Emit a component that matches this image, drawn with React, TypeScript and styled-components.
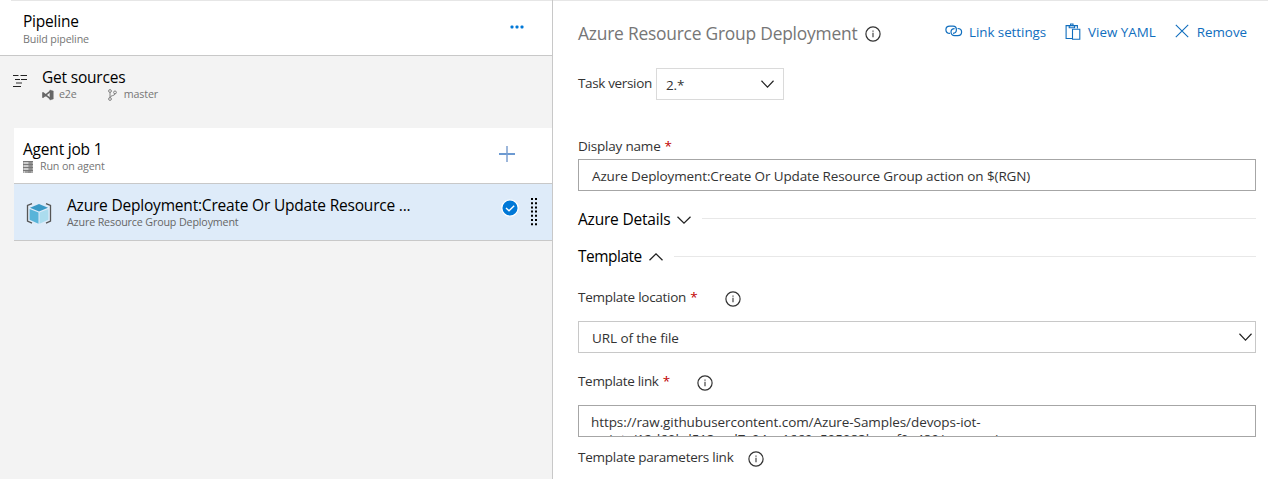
import React from 'react';
import styled, { createGlobalStyle } from 'styled-components';

const Global = createGlobalStyle`
  * { box-sizing: border-box; }
  html, body { margin: 0; background: #fff; }
  body { font-family: "Open Sans", "Noto Sans", sans-serif; overflow: hidden; }
  svg { display: block; flex: none; }
`;

const Page = styled.div`
  display: grid;
  grid-template-columns: 553px 1fr;
  width: 1268px;
  height: 479px;
  overflow: hidden;
`;

const Sidebar = styled.aside`
  background: #f3f3f3;
  border-right: 1px solid #c8c8c8;
  display: flex;
  flex-direction: column;
`;

const TopRule = styled.div<{ $inset?: number }>`
  height: 1px;
  background: #e6e6e6;
  margin-left: ${p => p.$inset ?? 0}px;
`;

const Text = styled.div<{ $size: number; $line: number; $color?: string; $track?: number }>`
  font-size: ${p => p.$size}px;
  line-height: ${p => p.$line}px;
  height: ${p => p.$line}px;
  color: ${p => p.$color ?? '#000'};
  letter-spacing: ${p => p.$track ?? 0}px;
  white-space: nowrap;
`;

const Heading = styled(Text).attrs({ $size: 15.5, $track: -0.2 })``;
const Small = styled(Text).attrs({ $size: 10.7, $line: 15, $track: -0.14 })``;
const Body = styled(Text).attrs({ $size: 13.5, $line: 20 })``;

const PipelineHeader = styled.header`
  height: 56px;
  background: #fff;
  border-bottom: 1px solid #c8c8c8;
  display: flex;
  flex-direction: column;
`;

const HeaderBody = styled.div`
  display: flex;
  justify-content: space-between;
  padding: 10px 28px 0 23px;
`;

const MoreWrap = styled.div`
  padding-top: 14px;
`;

const Sources = styled.section`
  height: 72px;
  display: flex;
  padding: 11px 0 0 13px;
  gap: 14px;
`;

const SourcesIcon = styled.div`
  padding-top: 8px;
`;

const Meta = styled.div`
  display: flex;
  align-items: center;
`;

const MetaIcon = styled.span<{ $gap: number }>`
  margin-right: ${p => p.$gap}px;
`;

const Branch = styled.div`
  display: flex;
  align-items: center;
  margin-left: 31px;
`;

const JobRow = styled.section`
  height: 56px;
  margin-left: 14px;
  background: #fff;
  border-bottom: 1px solid #c8c8c8;
  display: flex;
  justify-content: space-between;
  padding: 11px 37px 0 9px;
`;

const AddWrap = styled.div`
  padding-top: 7px;
`;

const TaskRow = styled.section`
  height: 57px;
  margin-left: 14px;
  background: #deebf9;
  border-bottom: 1px solid #c8c8c8;
  display: flex;
  padding: 0 14px 0 12px;
`;

const TaskIcon = styled.div`
  width: 41px;
  padding-top: 18px;
`;

const TaskText = styled.div`
  flex: 1;
  padding-top: 11px;
`;

const CheckWrap = styled.div`
  padding: 15px 11px 0 0;
`;

const GripWrap = styled.div`
  padding-top: 13px;
`;

const Details = styled.main`
  background: #fff;
  display: flex;
  flex-direction: column;
`;

const DetailsBody = styled.div`
  padding: 0 12px 0 25px;
  display: flex;
  flex-direction: column;
`;

const TitleRow = styled.div`
  display: flex;
  justify-content: space-between;
  height: 67px;
  padding: 19px 9px 0 0;
`;

const Title = styled.div`
  display: flex;
  gap: 8px;
`;

const TitleIcon = styled.div`
  padding-top: 6px;
`;

const Actions = styled.div`
  display: flex;
`;

const Action = styled.div<{ $gap: number; $ml?: number }>`
  display: flex;
  align-items: flex-start;
  gap: ${p => p.$gap}px;
  margin-left: ${p => p.$ml ?? 0}px;
  height: 24px;
`;

const ActionIcon = styled.div<{ $top: number }>`
  padding-top: ${p => p.$top}px;
`;

const VersionRow = styled.div`
  display: flex;
  height: 68px;
`;

const VersionLabel = styled.div`
  width: 78px;
  padding-top: 5px;
`;

const Field = styled.div<{ $color: string; $width?: string; $left?: number; $right?: number }>`
  width: ${p => p.$width ?? '100%'};
  height: 32px;
  border: 1px solid ${p => p.$color};
  background: #fff;
  display: flex;
  justify-content: space-between;
  padding: 6px ${p => p.$right ?? 3}px 0 ${p => p.$left ?? 13}px;
  overflow: hidden;
  flex: none;
`;

const ChevronWrap = styled.div`
  padding-top: 5px;
`;

const LabelRow = styled.div<{ $height: number; $gap?: number; $top?: number }>`
  display: flex;
  height: ${p => p.$height}px;
  padding-top: ${p => p.$top ?? 0}px;
  gap: ${p => p.$gap ?? 0}px;
`;

const Required = styled.span`
  color: #c00000;
  margin-left: 4px;
`;

const InfoWrap = styled.div`
  padding-top: 4px;
`;

const SectionRow = styled.div<{ $height: number; $top: number; $gap: number }>`
  display: flex;
  height: ${p => p.$height}px;
  padding-top: ${p => p.$top}px;
  gap: ${p => p.$gap}px;
`;

const SectionChevron = styled.div`
  padding-top: 8px;
`;

const SectionLine = styled.div<{ $top: number }>`
  flex: 1;
  height: 1px;
  margin: ${p => p.$top}px 0 0 4px;
  background: #e8e8e8;
`;

const UrlText = styled.div`
  font-size: 13.5px;
  line-height: 17px;
  letter-spacing: -0.08px;
  padding-top: 1.5px;
  color: #333;
  white-space: pre;
`;

const Info = () => (
  <svg width="16" height="16" viewBox="0 0 16 16" fill="none" stroke="#333">
    <circle cx="8" cy="8" r="7.1" strokeWidth="1.2" />
    <path d="M8 6.8V11.3M8 4.5V5.8" strokeWidth="1.1" />
  </svg>
);

const Chevron = ({ up, w = 14 }: { up?: boolean; w?: number }) => (
  <svg width={w} height="8" viewBox="0 0 14 8" preserveAspectRatio="none" fill="none" stroke="#222" strokeWidth="1.3">
    <path d={up ? 'M.5 7.2L7 .9L13.5 7.2' : 'M.5 .8L7 7.1L13.5 .8'} />
  </svg>
);

const More = () => (
  <svg width="14" height="4" viewBox="0 0 14 4" fill="#0078d7">
    <rect x=".5" y=".5" width="3" height="3" rx="1" />
    <rect x="5.5" y=".5" width="3" height="3" rx="1" />
    <rect x="10.5" y=".5" width="3" height="3" rx="1" />
  </svg>
);

const SourceLines = () => (
  <svg width="15" height="13" viewBox="0 0 15 13" stroke="#222" strokeWidth="1.1">
    <path d="M0 .5H5.5M7.5 .5H14M2 4.5H7M8 4.5H14M0 11.5H8" />
    <path d="M3 8H9" strokeWidth="1.6" stroke="#777" />
  </svg>
);

const VsLogo = () => (
  <svg width="12" height="12" viewBox="0 0 12 12" fill="none" stroke="#666" strokeLinejoin="round">
    <path d="M8.6 2.2L1 8.2V3.8L8.6 9.8" strokeWidth="1.6" />
    <path d="M7.9 1L11.3 2V10L7.9 11Z" fill="#666" strokeWidth=".4" />
  </svg>
);

const BranchIcon = () => (
  <svg width="9" height="12" viewBox="0 0 9 12" fill="none" stroke="#777" strokeWidth=".9">
    <circle cx="2" cy="2" r="1.4" />
    <circle cx="2" cy="10" r="1.4" />
    <circle cx="7" cy="3.4" r="1.4" />
    <path d="M2 3.4V8.6M7 4.8C7 7 2.5 6 2 8.6" />
  </svg>
);

const ServerIcon = () => (
  <svg width="10" height="12" viewBox="0 0 10 12">
    <path d="M0 0H10V12H0Z" fill="#aaa" />
    <path d="M0 .5H10M0 3.5H10M0 6.5H10M0 9.5H10" stroke="#777" />
    <path d="M1 2H5M1 5H5M1 8H5M1 11H5" stroke="#eee" />
    <path d="M6 2H9M6 5H9M6 8H9M2 11H8" stroke="#777" />
  </svg>
);

const CubeIcon = () => (
  <svg width="26" height="24" viewBox="0 0 26 24">
    <path d="M6 1.7L1.5 3.5V19L6 21.1M20 1.7L24.5 3.5V19L20 21.1" fill="none" stroke="#555" strokeWidth="1.3" />
    <path d="M13 2L22 5.7L13 9.5L4 5.7Z" fill="#3999c6" />
    <path d="M3.6 6.9L12.5 10.5V21.8L3.6 17.7Z" fill="#59b4d9" />
    <path d="M22.4 6.9L13.5 10.5V21.8L22.4 17.7Z" fill="#abdcee" />
  </svg>
);

const Plus = () => (
  <svg width="16" height="16" viewBox="0 0 16 16" fill="none">
    <path d="M0 8H16" stroke="#6c9ad2" strokeWidth="2" />
    <path d="M8 0V16" stroke="#7d9fcf" strokeWidth="1.5" />
  </svg>
);

const Check = () => (
  <svg width="18" height="18" viewBox="0 0 18 18" fill="none">
    <circle cx="9" cy="9" r="8.2" fill="#0078d7" stroke="#fff" strokeWidth="1.3" />
    <path d="M5 9L8 11.7L13.2 6.8" stroke="#fff" strokeWidth="1.4" />
  </svg>
);

const Grip = () => (
  <svg width="8" height="30" viewBox="0 0 8 30" stroke="#000" strokeWidth="2">
    <path d="M2 1V30M6 1V30" strokeDasharray="2 2.2" />
  </svg>
);

const LinkIcon = () => (
  <svg width="18" height="12" viewBox="0 0 18 12" fill="none" stroke="#106ebe" strokeWidth="1.2">
    <path d="M5 8.4C2.4 8.4 .9 6.9 .9 4.8S2.4 1.2 4.8 1.2H8C10 1.2 11.4 2.7 11.4 4.8C11.4 6.9 10 8.3 8 8.3" />
    <path d="M12.6 3.5C15 3.5 16.6 5 16.6 7.1S15 10.7 12.8 10.7H9.6C7.4 10.7 6 9.2 6 7.1C6 5 7.4 3.7 9.6 3.7" />
  </svg>
);

const ClipboardIcon = () => (
  <svg width="16" height="17" viewBox="0 0 16 17" fill="none" stroke="#106ebe" strokeWidth="1.1">
    <path d="M7 15.5H1.1V2.6H12.4V5.6" />
    <path d="M4.2 4.7V2.6H5.6V1H8V2.6H9.6V4.7Z" />
    <path d="M7.5 6.2H14.8V16.2H7.5Z" fill="#fff" />
  </svg>
);

const CloseIcon = () => (
  <svg width="14" height="14" viewBox="0 0 14 14" fill="none" stroke="#106ebe" strokeWidth="1.1">
    <path d="M.8 .8L13.2 13.2M13.2 .8L.8 13.2" />
  </svg>
);

const BLUE = '#106ebe';
const INK = '#333';
const MUTED = '#767676';

export default function App() {
  return (
    <>
      <Global />
      <Page>
        <Sidebar>
          <PipelineHeader>
            <TopRule $inset={11} />
            <HeaderBody>
              <div>
                <Heading $line={21}>Pipeline</Heading>
                <Small $color={MUTED}>Build pipeline</Small>
              </div>
              <MoreWrap><More /></MoreWrap>
            </HeaderBody>
          </PipelineHeader>

          <Sources>
            <SourcesIcon><SourceLines /></SourcesIcon>
            <div>
              <Heading $line={20}>Get sources</Heading>
              <Meta>
                <MetaIcon $gap={5}><VsLogo /></MetaIcon>
                <Small $color={MUTED}>e2e</Small>
                <Branch>
                  <MetaIcon $gap={7}><BranchIcon /></MetaIcon>
                  <Small $color={MUTED}>master</Small>
                </Branch>
              </Meta>
            </div>
          </Sources>

          <JobRow>
            <div>
              <Heading $line={20}>Agent job 1</Heading>
              <Meta>
                <MetaIcon $gap={7}><ServerIcon /></MetaIcon>
                <Small $color={MUTED}>Run on agent</Small>
              </Meta>
            </div>
            <AddWrap><Plus /></AddWrap>
          </JobRow>

          <TaskRow>
            <TaskIcon><CubeIcon /></TaskIcon>
            <TaskText>
              <Heading $line={20}>Azure Deployment:Create Or Update Resource ...</Heading>
              <Small $color="#666">Azure Resource Group Deployment</Small>
            </TaskText>
            <CheckWrap><Check /></CheckWrap>
            <GripWrap><Grip /></GripWrap>
          </TaskRow>
        </Sidebar>

        <Details>
          <TopRule />
          <DetailsBody>
            <TitleRow>
              <Title>
                <Text $size={17.4} $track={-0.22} $line={26} $color={MUTED}>Azure Resource Group Deployment</Text>
                <TitleIcon><Info /></TitleIcon>
              </Title>
              <Actions>
                <Action $gap={6}>
                  <ActionIcon $top={5}><LinkIcon /></ActionIcon>
                  <Text $size={13.4} $track={-0.05} $line={24} $color={BLUE}>Link settings</Text>
                </Action>
                <Action $gap={7} $ml={19}>
                  <ActionIcon $top={3}><ClipboardIcon /></ActionIcon>
                  <Text $size={13.4} $line={24} $color={BLUE}>View YAML</Text>
                </Action>
                <Action $gap={8} $ml={19}>
                  <ActionIcon $top={4}><CloseIcon /></ActionIcon>
                  <Text $size={13.4} $track={-0.05} $line={24} $color={BLUE}>Remove</Text>
                </Action>
              </Actions>
            </TitleRow>

            <VersionRow>
              <VersionLabel><Body $track={-0.35} $color={INK}>Task version</Body></VersionLabel>
              <Field $color="#dadada" $width="128px" $left={9} $right={9}>
                <Body $track={-0.15} $color={INK}>2.*</Body>
                <ChevronWrap><Chevron w={13} /></ChevronWrap>
              </Field>
            </VersionRow>

            <LabelRow $height={23}>
              <Body $track={-0.2} $color={INK}>Display name<Required>*</Required></Body>
            </LabelRow>
            <Field $color="#a6a6a6">
              <Body $track={-0.12} $color={INK}>Azure Deployment:Create Or Update Resource Group action on $(RGN)</Body>
            </Field>

            <SectionRow $height={47} $top={17} $gap={7}>
              <Heading $line={23}>Azure Details</Heading>
              <SectionChevron><Chevron /></SectionChevron>
              <SectionLine $top={10} />
            </SectionRow>
            <SectionRow $height={49} $top={7} $gap={7}>
              <Text $size={15.4} $track={-0.45} $line={24}>Template</Text>
              <SectionChevron><Chevron up /></SectionChevron>
              <SectionLine $top={11} />
            </SectionRow>

            <LabelRow $height={34} $gap={28}>
              <Body $track={-0.27} $color={INK}>Template location<Required>*</Required></Body>
              <InfoWrap><Info /></InfoWrap>
            </LabelRow>
            <Field $color="#c8c8c8">
              <Body $track={-0.08} $color={INK}>URL of the file</Body>
              <ChevronWrap><Chevron w={13} /></ChevronWrap>
            </Field>

            <LabelRow $height={52} $gap={27} $top={18}>
              <Body $track={-0.32} $color={INK}>Template link<Required>*</Required></Body>
              <InfoWrap><Info /></InfoWrap>
            </LabelRow>
            <Field $color="#a6a6a6" $left={12}>
              <UrlText>{'https://raw.githubusercontent.com/Azure-Samples/devops-iot-\nscripts/12d60bd513ead7c94aa1669e505083beaaf0e489/armversion'}</UrlText>
            </Field>

            <LabelRow $height={40} $gap={15} $top={10}>
              <Body $track={-0.25} $color={INK}>Template parameters link</Body>
              <InfoWrap><Info /></InfoWrap>
            </LabelRow>
          </DetailsBody>
        </Details>
      </Page>
    </>
  );
}
